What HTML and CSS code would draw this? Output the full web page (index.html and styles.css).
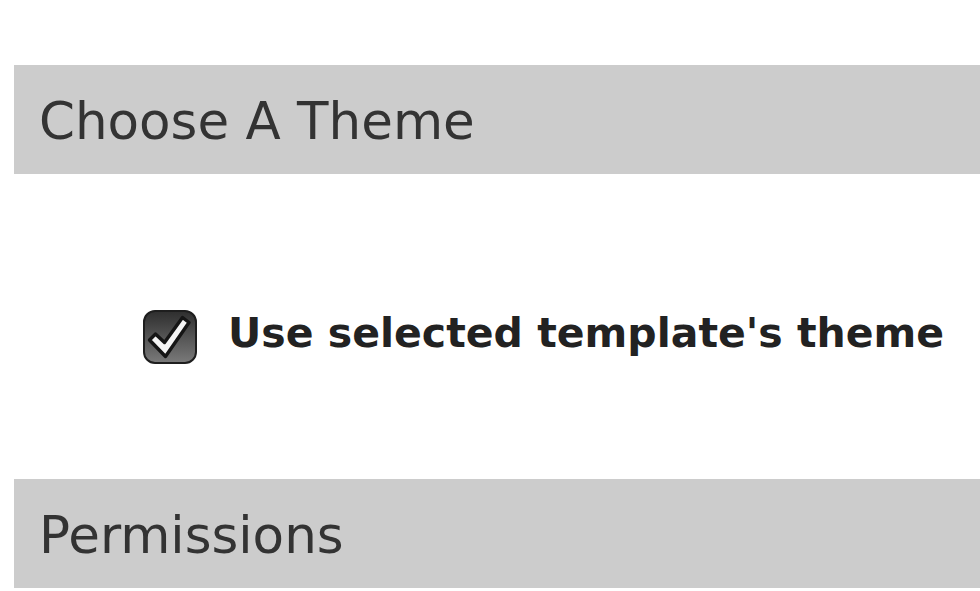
FILE: index.html
```html
<!DOCTYPE html>
<html>
<head>
<meta charset="utf-8">
<link rel="stylesheet" href="styles.css">
</head>
<body>
  <div class="section-header"><h2 class="section-title">Choose A Theme</h2></div>
  <div class="option-row">
    <span class="checkbox">
      <svg width="54" height="54" viewBox="0 0 54 54">
        <defs>
          <linearGradient id="cbg" x1="0" y1="0" x2="0" y2="1">
            <stop offset="0" stop-color="#2e2e2e"/>
            <stop offset="1" stop-color="#7a7a7a"/>
          </linearGradient>
        </defs>
        <rect x="1" y="1" width="52" height="52" rx="11" ry="11" fill="url(#cbg)" stroke="#1e1e1e" stroke-width="2"/>
        <polygon points="6.5,30 12.5,24 21.5,32.5 39.5,7.5 46,12.5 22.5,46.5" fill="#f4f4f4" stroke="#151515" stroke-width="3.4" stroke-linejoin="round"/>
      </svg>
    </span>
    <span class="option-label">Use selected template's theme</span>
  </div>
  <div class="section-header"><h2 class="section-title">Permissions</h2></div>
</body>
</html>
```
FILE: styles.css
```css
html, body {
  margin: 0;
  padding: 0;
  background: #ffffff;
}
body {
  font-family: "DejaVu Sans", Verdana, sans-serif;
  padding-top: 65px;
  padding-left: 14px;
}
.section-header {
  background: #cccccc;
  height: 109px;
  display: flex;
  align-items: center;
  padding-left: 25px;
}
.section-title {
  margin: 0;
  font-weight: normal;
  font-size: 51.5px;
  color: #333333;
  line-height: 1;
  position: relative;
  top: 2px;
}
.option-row {
  display: flex;
  align-items: center;
  gap: 31px;
  padding-left: 129px;
  padding-top: 20px;
  height: 285px;
}
.checkbox {
  display: block;
  width: 54px;
  height: 54px;
}
.checkbox svg { display: block; }
.option-label {
  font-weight: bold;
  font-size: 41px;
  color: #222222;
  margin-bottom: 8px;
}
```
